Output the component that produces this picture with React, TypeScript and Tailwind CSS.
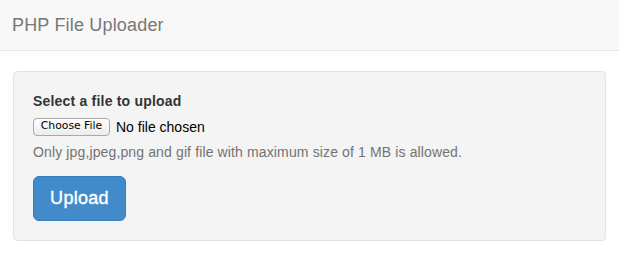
import React from "react";

export default function App() {
  return (
    <div className="min-h-screen bg-white font-['Liberation_Sans',Arial,sans-serif] text-[14px] leading-[20px] text-[#333] tracking-[0.13px]">
      <nav className="h-[51px] bg-[#f8f8f8] border-b border-[#e7e7e7] flex items-center pl-[12px]">
        <span className="text-[18px] leading-[20px] text-[#777] tracking-[0.18px]">PHP File Uploader</span>
      </nav>
      <div className="mx-[13px] mt-[20px] bg-[#f4f4f4] border border-[#e3e3e3] rounded-[4px] p-[19px]">
        <label className="block font-bold mb-[5px] tracking-[0.2px]">Select a file to upload</label>
        <div className="flex items-center h-[21px] gap-[6px]">
          <span className="inline-flex items-center justify-center w-[77px] h-[18px] rounded-[4px] border border-[#a9a9a9] bg-gradient-to-b from-white to-[#ececec] font-['DejaVu_Sans',sans-serif] text-[10.8px] leading-none text-black tracking-normal">
            Choose File
          </span>
          <span className="text-[14px] text-black tracking-normal">No file chosen</span>
        </div>
        <p className="mt-[5px] text-[#737373]">
          Only jpg,jpeg,png and gif file with maximum size of 1 MB is allowed.
        </p>
        <button className="mt-[14px] block w-[93px] py-[9px] text-[18px] leading-[25px] text-white bg-[#428bca] border border-[#357ebd] rounded-[6px] tracking-[0.3px] [-webkit-text-stroke:0.4px_white]">
          Upload
        </button>
      </div>
    </div>
  );
}
